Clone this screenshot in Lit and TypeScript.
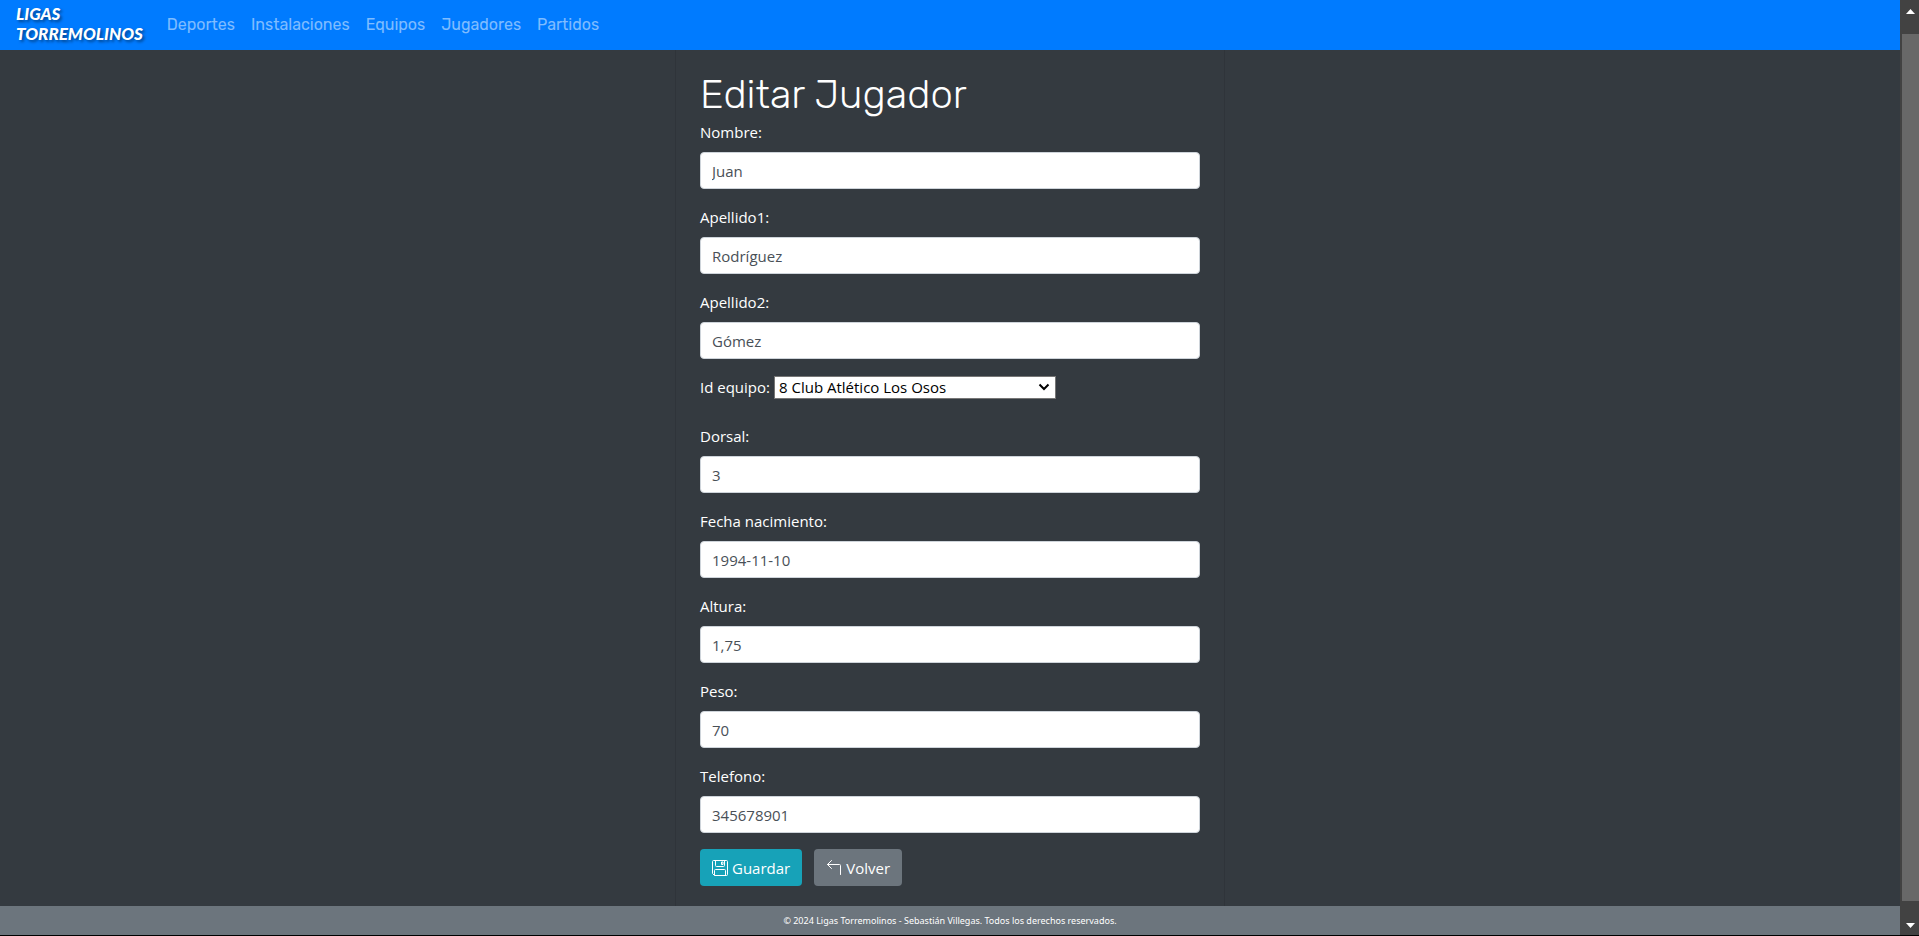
import { LitElement, html, css } from "lit";
import { customElement, state } from "lit/decorators.js";

interface Field {
  id: string;
  label: string;
  value: string;
}

const NAV = ["Deportes", "Instalaciones", "Equipos", "Jugadores", "Partidos"];

const PERSONAL: Field[] = [
  { id: "nombre", label: "Nombre:", value: "Juan" },
  { id: "apellido1", label: "Apellido1:", value: "Rodríguez" },
  { id: "apellido2", label: "Apellido2:", value: "Gómez" },
];

const DETAILS: Field[] = [
  { id: "dorsal", label: "Dorsal:", value: "3" },
  { id: "fecha", label: "Fecha nacimiento:", value: "1994-11-10" },
  { id: "altura", label: "Altura:", value: "1,75" },
  { id: "peso", label: "Peso:", value: "70" },
  { id: "telefono", label: "Telefono:", value: "345678901" },
];

@customElement("app-navbar")
export class AppNavbar extends LitElement {
  static styles = css`
    :host {
      display: block;
      background: #007bff;
    }
    .bar {
      display: flex;
      align-items: center;
      min-height: 50px;
      padding: 0 16px;
      box-sizing: border-box;
      gap: 24px;
    }
    .brand {
      padding-bottom: 2px;
      color: #fff;
      font: italic 900 17px/20px Lato, sans-serif;
      text-decoration: none;
      text-shadow: 2px 2px 3px rgba(0, 0, 0, 0.45);
    }
    .brand span {
      display: block;
    }
    .links {
      display: flex;
      gap: 16px;
      margin: 0;
      padding: 0;
      list-style: none;
    }
    .link {
      color: rgba(255, 255, 255, 0.5);
      font: 400 16px/24px Rubik, Roboto, sans-serif;
      text-decoration: none;
    }
    .link:hover {
      color: rgba(255, 255, 255, 0.75);
    }
  `;

  render() {
    return html`
      <nav class="bar">
        <a class="brand" href="#"><span>LIGAS</span><span>TORREMOLINOS</span></a>
        <ul class="links">
          ${NAV.map((n) => html`<li><a class="link" href="#${n.toLowerCase()}">${n}</a></li>`)}
        </ul>
      </nav>
    `;
  }
}

@customElement("player-form")
export class PlayerForm extends LitElement {
  @state() private team = "8";

  static styles = css`
    :host {
      display: block;
      color: #fff;
      font: 15px/24px "Open Sans", "Noto Sans", sans-serif;
    }
    .title {
      margin: 0 0 2px;
      font: 300 40px/46px Rubik, Roboto, sans-serif;
    }
    .group {
      display: flex;
      flex-direction: column;
      gap: 8px;
      margin-bottom: 16px;
    }
    .control {
      box-sizing: border-box;
      width: 100%;
      height: 37px;
      padding: 6px 11px;
      border: 1px solid #ced4da;
      border-radius: 4px;
      background: #fff;
      color: #495057;
      font: inherit;
    }
    .row {
      display: flex;
      align-items: center;
      gap: 4px;
      margin-bottom: 25px;
    }
    .picker {
      position: relative;
      display: flex;
    }
    .select {
      appearance: none;
      box-sizing: border-box;
      width: 282px;
      height: 23px;
      padding: 0 24px 0 4px;
      border: 1px solid #767676;
      border-radius: 0;
      background: #fff;
      color: #000;
      font: inherit;
      line-height: 20px;
    }
    .chevron {
      position: absolute;
      right: 6px;
      top: 6px;
      pointer-events: none;
    }
    .actions {
      display: flex;
      gap: 12px;
    }
    .button {
      display: flex;
      align-items: center;
      gap: 4px;
      height: 37px;
      padding: 0 12px;
      border: 0;
      border-radius: 4px;
      color: #fff;
      font: inherit;
      text-decoration: none;
      cursor: pointer;
    }
    .save {
      background: #17a2b8;
    }
    .back {
      background: #6c757d;
    }
  `;

  private field(f: Field) {
    return html`
      <div class="group">
        <label for=${f.id}>${f.label}</label>
        <input class="control" id=${f.id} type="text" .value=${f.value} />
      </div>
    `;
  }

  render() {
    return html`
      <form @submit=${(e: Event) => e.preventDefault()}>
        <h1 class="title">Editar Jugador</h1>
        ${PERSONAL.map((f) => this.field(f))}
        <div class="row">
          <label for="equipo">Id equipo:</label>
          <span class="picker">
            <select
              class="select"
              id="equipo"
              .value=${this.team}
              @change=${(e: Event) => (this.team = (e.target as HTMLSelectElement).value)}
            >
              <option value="8">8 Club Atlético Los Osos</option>
            </select>
            <svg class="chevron" width="12" height="10" viewBox="0 0 12 10" aria-hidden="true">
              <path d="M1.5 2.5 6 7l4.500-4.500" fill="none" stroke="#000" stroke-width="2" />
            </svg>
          </span>
        </div>
        ${DETAILS.map((f) => this.field(f))}
        <div class="actions">
          <button class="button save" type="submit">
            <svg width="16" height="16" viewBox="0 0 16 16" fill="none" stroke="currentColor" aria-hidden="true">
              <path d="M.5 1.500a1 1 0 0 1 1-1h13a1 1 0 0 1 1 1v13a1 1 0 0 1-1 1H2.500l-2-2z" />
              <path d="M3.500.5v5a1 1 0 0 0 1 1h7a1 1 0 0 0 1-1v-5M2.500 15.500v-5a1 1 0 0 1 1-1h9a1 1 0 0 1 1 1v5M9.500 2h1.500v2.500H9.500z" />
            </svg>
            Guardar
          </button>
          <a class="button back" href="#jugadores">
            <svg width="16" height="16" viewBox="0 0 16 16" fill="none" stroke="currentColor" stroke-linecap="round" stroke-linejoin="round" aria-hidden="true">
              <path d="M5.500.5 1.500 4.500l4 4M1.500 4.500h12a1 1 0 0 1 1 1v9" />
            </svg>
            Volver
          </a>
        </div>
      </form>
    `;
  }
}

@customElement("app-root")
export class AppRoot extends LitElement {
  static styles = css`
    :host {
      display: flex;
      box-sizing: border-box;
      min-height: 100vh;
      border-bottom: 1px solid #000;
      background: #343a40;
    }
    .page {
      flex: 1;
      display: flex;
      flex-direction: column;
    }
    .main {
      flex: 1;
      display: flex;
      justify-content: center;
    }
    .card {
      box-sizing: border-box;
      width: 100%;
      max-width: 550px;
      padding: 22px 24px 19px;
      border: solid #2f343a;
      border-width: 0 1px;
    }
    .footer {
      padding: 4px 16px;
      background: #6c757d;
      color: #fff;
      font: 9px/21px "Noto Sans", "Open Sans", sans-serif;
      text-align: center;
    }
    .scroll {
      display: flex;
      flex-direction: column;
      align-items: center;
      width: 19px;
      background: #424242;
    }
    .arrow {
      flex: none;
      width: 17px;
      height: 34px;
      margin-left: 2px;
    }
    .thumb {
      flex: 1;
      width: 17px;
      margin-left: 2px;
      background: #686868;
    }
  `;

  render() {
    return html`
      <div class="page">
        <app-navbar></app-navbar>
        <main class="main">
          <div class="card"><player-form></player-form></div>
        </main>
        <footer class="footer">
          © 2024 Ligas Torremolinos - Sebastián Villegas. Todos los derechos reservados.
        </footer>
      </div>
      <div class="scroll" aria-hidden="true">
        <svg class="arrow" viewBox="0 0 17 34"><path d="M4 14 8.500 9l4.500 5z" fill="#fff" /></svg>
        <div class="thumb"></div>
        <svg class="arrow" viewBox="0 0 17 34"><path d="M4 22l4.500 5 4.500-5z" fill="#fff" /></svg>
      </div>
    `;
  }
}
